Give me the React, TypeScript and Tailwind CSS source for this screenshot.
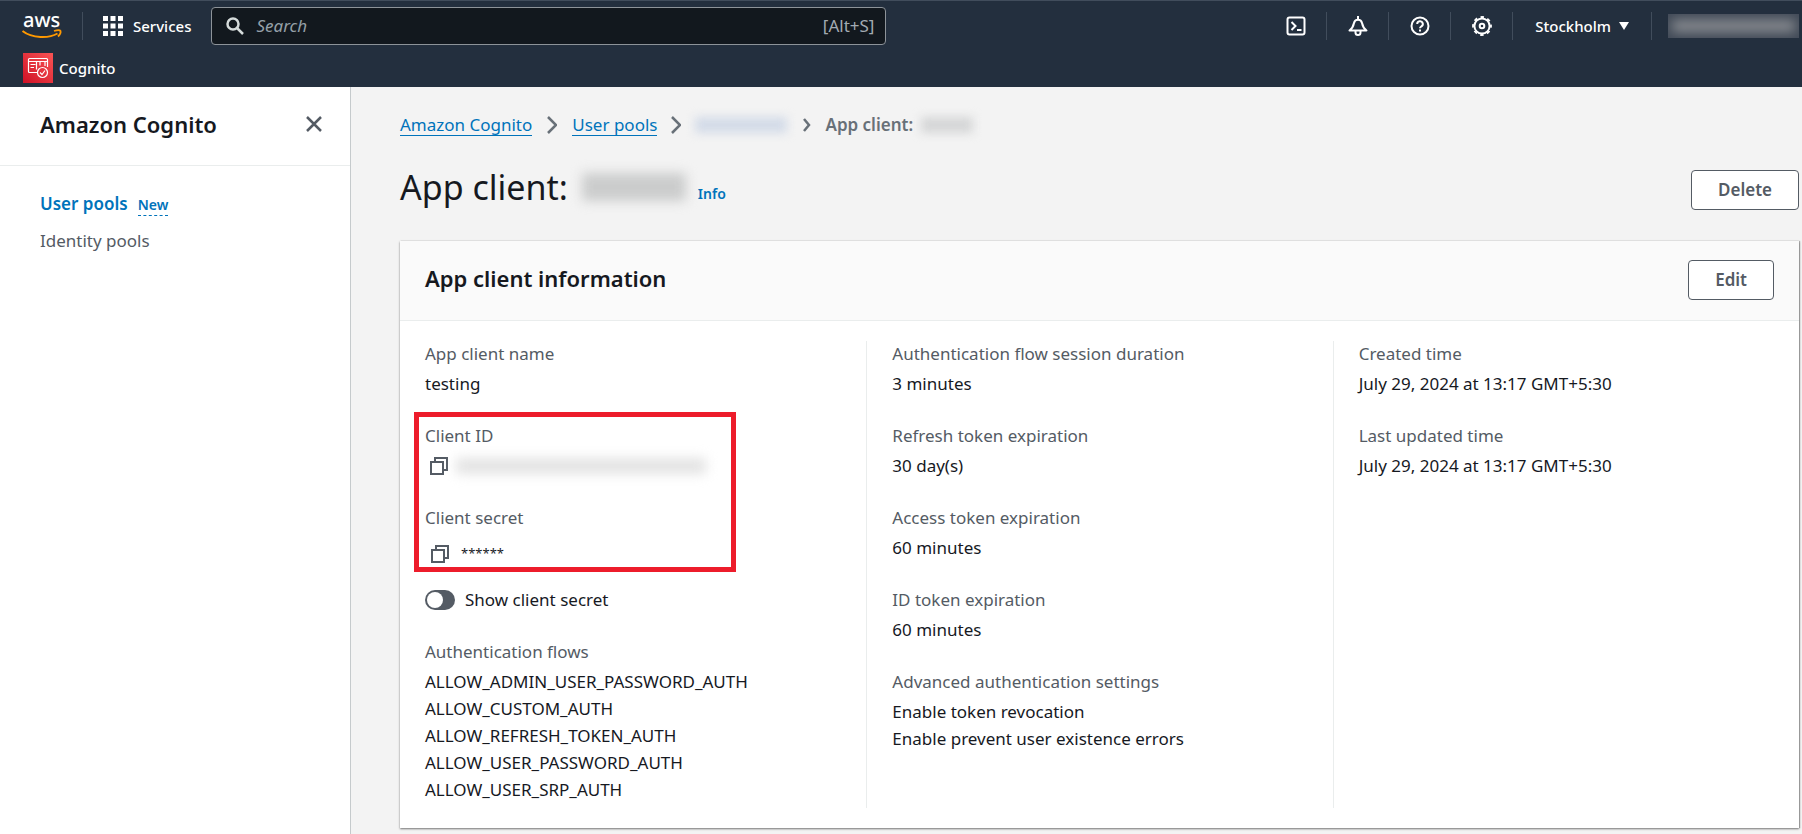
import { useState } from "react";
import type { ReactNode } from "react";

function AwsLogo() {
    return (
        <svg viewBox="0 0 40 28" className="w-10 h-7 overflow-visible" aria-label="AWS">
            <text x="1" y="15" fontSize="20" fontFamily="Noto Sans, sans-serif" fontWeight="500" fill="#fff" textRendering="geometricPrecision">aws</text>
            <path d="M0.500 19C10 26.500 27 26.500 35.500 21.500" fill="none" stroke="#f90" strokeWidth="2" />
            <path d="M32 19C35 18 38 18 38.500 19C39 20.500 37.500 23 36 24.500" fill="none" stroke="#f90" strokeWidth="1.800" />
        </svg>
    )
}

function CognitoLogo() {
    return (
        <svg viewBox="0 0 30 30" className="w-[30px] h-[30px]" aria-hidden="true">
            <defs>
                <linearGradient id="cognito" x1="0" y1="1" x2="1" y2="0">
                    <stop offset="0" stopColor="#cf1126" />
                    <stop offset="1" stopColor="#f95454" />
                </linearGradient>
            </defs>
            <rect width="30" height="30" fill="url(#cognito)" />
            <g fill="none" stroke="#fff" strokeWidth="1.200">
                <path d="M14.500 19.500H6.500a1 1 0 0 1-1-1V6.500a1 1 0 0 1 1-1h17a1 1 0 0 1 1 1V14M5.500 8.500h19" />
                <path d="M7.500 11.500h5M7.500 14.500h3.500M13.500 16.500V9M17 8.500v4M22 8.500V13" />
                <circle cx="19.500" cy="19.500" r="5" />
                <path d="M17 19.500l2 2 3-4" />
            </g>
        </svg>
    )
}

function CopyIcon() {
    return (
        <svg viewBox="0 0 18 18" className="block w-[18px] h-[18px]" fill="none" stroke="#545b64" strokeWidth="2">
            <path d="M1 5h12v12H1zM5 5V1h12v12h-4" />
        </svg>
    )
}

function Chevron() {
    return (
        <svg viewBox="0 0 10 18" className="w-[10px] h-[18px] shrink-0" fill="none" stroke="#687078" strokeWidth="2.500">
            <path d="M1 1l8 8-8 8" />
        </svg>
    )
}

function NavIcon({ label, children }: { label: string, children: ReactNode }) {
    return (
        <button aria-label={label} className="flex items-center justify-center h-7 w-[62px] border-r border-[#414d5c]">
            <svg viewBox="0 0 20 20" className="w-5 h-5" fill="none" stroke="#fff" strokeWidth="2">
                {children}
            </svg>
        </button>
    )
}

function Field({ label, children }: { label: string, children: ReactNode }) {
    return (
        <div>
            <dt className="text-[#545b64] leading-[26px]">{label}</dt>
            <dd className="mt-[3px] leading-[27px]">{children}</dd>
        </div>
    )
}

function TopBar() {
    return (
        <header className="bg-[#232f3e] text-white border-t border-[#414d5c]">
            <div className="flex items-center h-[50px] pl-[22px]">
                <a href="#"><AwsLogo /></a>
                <div className="w-px h-7 ml-5 bg-[#414d5c]"></div>
                <button className="flex items-center gap-[10px] ml-5 text-[15px] font-medium">
                    <svg viewBox="0 0 20 20" className="w-5 h-5" fill="#fff">
                        <path d="M0 0h5v5H0zM7.500 0h5v5h-5zM15 0h5v5h-5zM0 7.500h5v5H0zM7.500 7.500h5v5h-5zM15 7.500h5v5h-5zM0 15h5v5H0zM7.500 15h5v5h-5zM15 15h5v5h-5z" />
                    </svg>
                    Services
                </button>
                <label className="flex items-center w-[675px] h-[38px] ml-5 px-[11px] pl-[14px] bg-[#12181e] border border-[#8d9399] rounded-sm">
                    <svg viewBox="0 0 18 18" className="w-[18px] h-[18px] shrink-0" fill="none" stroke="#d5dbdb" strokeWidth="2.500">
                        <circle cx="7" cy="7" r="5.500" />
                        <path d="M11 11l6 6" />
                    </svg>
                    <input type="search" aria-label="Search" placeholder="Search" className="grow min-w-0 ml-3 bg-transparent outline-none italic text-[17px] placeholder:text-[#95a0a8]" />
                    <span className="text-[17px] text-[#a2abb2]">[Alt+S]</span>
                </label>
                <div className="flex items-center ml-auto">
                    <NavIcon label="CloudShell">
                        <rect x="1.500" y="1.500" width="17" height="17" rx="2" />
                        <path d="M5.500 6l4 4-4 4M11 14h4.500" />
                    </NavIcon>
                    <NavIcon label="Notifications">
                        <path d="M10 0v3M1.500 14.500C5 12 5.500 9.500 6 7a4.100 4.100 0 0 1 8 0c.500 2.500 1 5 4.500 7.500z" strokeLinejoin="round" />
                        <path d="M7.500 15v1.500a2.500 2.500 0 0 0 5 0V15" />
                    </NavIcon>
                    <NavIcon label="Support">
                        <circle cx="10" cy="10" r="8.500" />
                        <path d="M7.200 8a2.800 2.800 0 1 1 4 2.500c-.900.500-1.200.900-1.200 1.800M10 13.500v2" />
                    </NavIcon>
                    <NavIcon label="Settings">
                        <circle cx="10" cy="10" r="7.600" />
                        <circle cx="10" cy="10" r="9" strokeWidth="1.800" strokeDasharray="3.500 3.568" strokeDashoffset="1.750" />
                        <circle cx="10" cy="10" r="2.300" />
                    </NavIcon>
                    <button className="flex items-center gap-2 h-7 px-[22px] text-[15px] font-medium border-r border-[#414d5c]">
                        Stockholm
                        <svg viewBox="0 0 10 8" className="w-[10px] h-2" fill="#fff"><path d="M0 0h10L5 8z" /></svg>
                    </button>
                    <div className="w-[131px] h-6 ml-4 mr-[3px] overflow-hidden bg-[#414a57]">
                        <div className="h-3 mx-1 mt-[6px] bg-[#8a8d92] blur-[6px]"></div>
                    </div>
                </div>
            </div>
            <div className="flex items-center h-9 pl-[23px] pb-[2px]">
                <a href="#" className="flex items-center gap-[6px] text-[15px] font-medium"><CognitoLogo />Cognito</a>
            </div>
        </header>
    )
}

function SideNav() {
    return (
        <aside className="w-[351px] shrink-0 bg-white border-r border-[#c5cacc]">
            <div className="flex items-center justify-between h-[79px] pb-1 pl-10 pr-7 border-b border-[#eaeded]">
                <h2 className="text-[22px] font-semibold">Amazon Cognito</h2>
                <button aria-label="Close navigation">
                    <svg viewBox="0 0 16 16" className="w-4 h-4" fill="none" stroke="#545b64" strokeWidth="2.500"><path d="M1 1l14 14M15 1L1 15" /></svg>
                </button>
            </div>
            <ul className="flex flex-col gap-[10px] pl-10 pt-6 leading-[27px]">
                <li className="flex items-baseline gap-[10px] font-semibold text-[#0073bb]">
                    <a href="#">User pools</a>
                    <a href="#" className="text-[14px] leading-5 border-b border-dashed border-[#0073bb]">New</a>
                </li>
                <li><a href="#" className="text-[#545b64]">Identity pools</a></li>
            </ul>
        </aside>
    )
}

export default function App() {

    const [showSecret, setShowSecret] = useState(false);

    return (
        <div className="flex flex-col min-h-screen bg-[#f3f3f3] text-[#16191f] text-[17px] font-['Noto_Sans',sans-serif]">
            <TopBar />
            <div className="flex grow">
                <SideNav />
                <main className="grow min-w-0 pl-[49px] pr-[3px] pt-6">
                    <nav className="flex items-center h-7 text-[#0073bb]">
                        <a href="#" className="leading-[21px] border-b border-[#0073bb]">Amazon Cognito</a>
                        <div className="mx-[15px]"><Chevron /></div>
                        <a href="#" className="leading-[21px] border-b border-[#0073bb]">User pools</a>
                        <div className="mx-[14px]"><Chevron /></div>
                        <div className="w-[92px] h-4 bg-[#d3dbe8] blur-[5px]"></div>
                        <svg viewBox="0 0 8 14" className="w-2 h-[14px] ml-4 mr-[14px]" fill="none" stroke="#687078" strokeWidth="2.500"><path d="M1 1l5 6-5 6" /></svg>
                        <span className="font-semibold text-[#687078]">App client:</span>
                        <div className="w-[52px] h-4 ml-2 bg-[#d5d6d7] blur-[5px]"></div>
                    </nav>
                    <div className="flex items-start justify-between mt-4">
                        <div className="flex items-center pt-[10px]">
                            <h1 className="text-[34px] leading-[44px]">App client:</h1>
                            <div className="w-[104px] h-7 ml-[14px] bg-[#cbcccc] blur-[6px]"></div>
                            <a href="#" className="ml-3 mt-3 text-[14px] font-semibold text-[#0073bb]">Info</a>
                        </div>
                        <button className="h-10 mt-[15px] px-[26px] bg-white border border-[#545b64] rounded-sm font-semibold text-[#545b64]">Delete</button>
                    </div>

                    <section className="mt-[31px] bg-white shadow-[0_1px_2px_#00000080,1px_0_1px_#00000040]">
                        <div className="flex items-start justify-between h-20 pt-[19px] px-[25px] bg-[#fafafa] border-b border-[#eaeded]">
                            <h2 className="text-[22px] leading-9 font-semibold">App client information</h2>
                            <button className="h-10 px-[26px] bg-white border border-[#545b64] rounded-sm font-semibold text-[#545b64]">Edit</button>
                        </div>
                        <div className="grid grid-cols-3 py-5">
                            <dl className="flex flex-col gap-[26px] px-[25px] pb-[5px]">
                                <Field label="App client name">testing</Field>
                                <div className="flex flex-col gap-[26px] w-[322px] -mx-[11px] -my-[11px] px-[6px] pt-[6px] border-5 border-[#ed1c2b]">
                                    <Field label="Client ID">
                                        <div className="flex items-center gap-2 h-[27px] pl-[5px]">
                                            <button aria-label="Copy client ID"><CopyIcon /></button>
                                            <div className="w-[250px] h-4 bg-[#e3e3e3] blur-[6px]"></div>
                                        </div>
                                    </Field>
                                    <Field label="Client secret">
                                        <div className="flex items-center gap-3 pl-[6px] pt-[6px]">
                                            <button aria-label="Copy client secret"><CopyIcon /></button>
                                            <span className="text-[13px] leading-[27px]">******</span>
                                        </div>
                                    </Field>
                                </div>
                                <label className="flex items-center gap-[10px]">
                                    <input type="checkbox" role="switch" checked={showSecret} onChange={() => setShowSecret(!showSecret)} className="peer sr-only" />
                                    <span className="flex w-[30px] h-5 p-[2px] rounded-full bg-[#545b64] peer-checked:justify-end peer-checked:bg-[#0073bb]">
                                        <span className="w-4 h-4 rounded-full bg-white"></span>
                                    </span>
                                    Show client secret
                                </label>
                                <Field label="Authentication flows">
                                    <ul>
                                        <li>ALLOW_ADMIN_USER_PASSWORD_AUTH</li>
                                        <li>ALLOW_CUSTOM_AUTH</li>
                                        <li>ALLOW_REFRESH_TOKEN_AUTH</li>
                                        <li>ALLOW_USER_PASSWORD_AUTH</li>
                                        <li>ALLOW_USER_SRP_AUTH</li>
                                    </ul>
                                </Field>
                            </dl>
                            <dl className="flex flex-col gap-[26px] px-[25px] border-l border-[#eaeded]">
                                <Field label="Authentication flow session duration">3 minutes</Field>
                                <Field label="Refresh token expiration">30 day(s)</Field>
                                <Field label="Access token expiration">60 minutes</Field>
                                <Field label="ID token expiration">60 minutes</Field>
                                <Field label="Advanced authentication settings">
                                    <div>Enable token revocation</div>
                                    <div>Enable prevent user existence errors</div>
                                </Field>
                            </dl>
                            <dl className="flex flex-col gap-[26px] px-[25px] border-l border-[#eaeded]">
                                <Field label="Created time">July 29, 2024 at 13:17 GMT+5:30</Field>
                                <Field label="Last updated time">July 29, 2024 at 13:17 GMT+5:30</Field>
                            </dl>
                        </div>
                    </section>
                </main>
            </div>
        </div>
    )

}
